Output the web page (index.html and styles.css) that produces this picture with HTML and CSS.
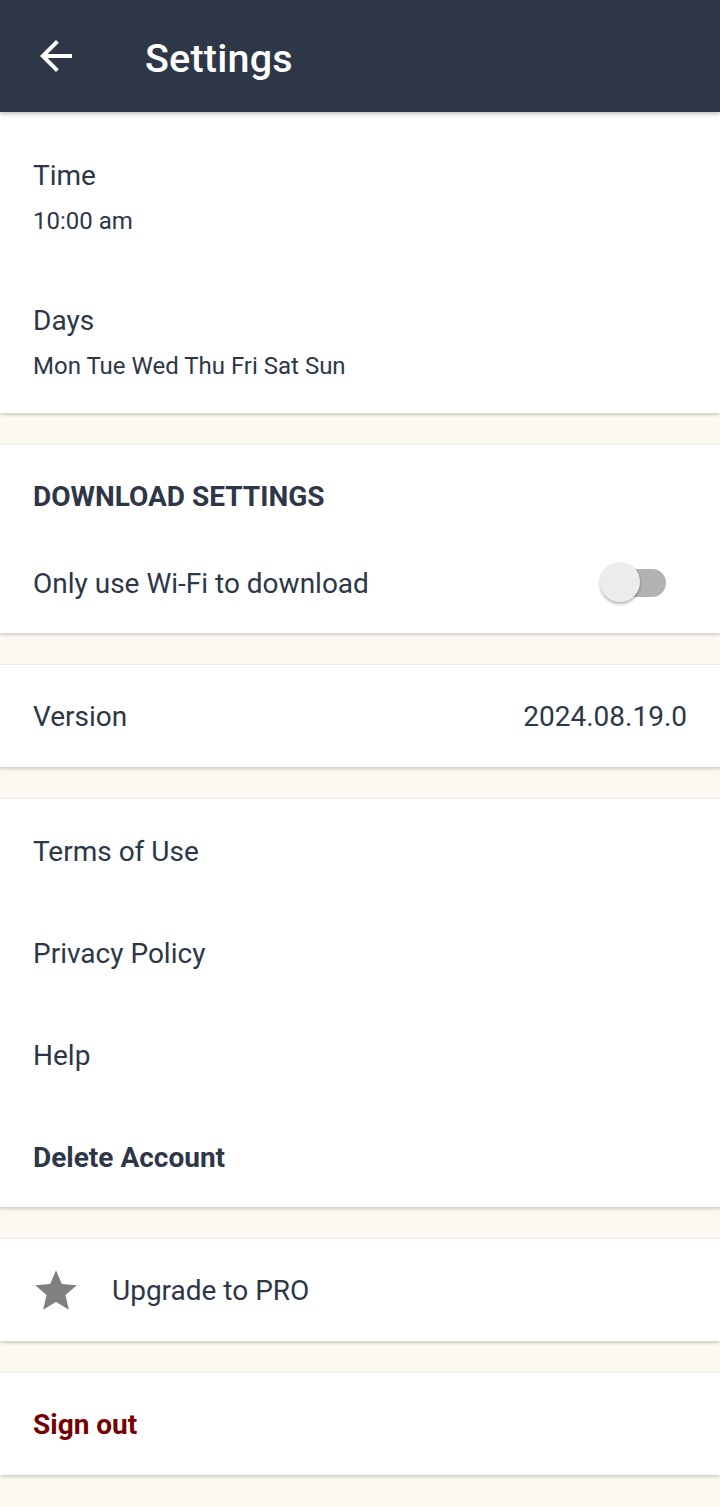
FILE: index.html
```html
<!DOCTYPE html>
<html>
<head>
<meta charset="utf-8">
<link rel="stylesheet" href="styles.css">
</head>
<body>
<header class="appbar">
  <svg class="back" viewBox="0 0 24 24" width="48" height="48"><path fill="#fff" d="M20 11H7.83l5.59-5.59L12 4l-8 8 8 8 1.41-1.41L7.83 13H20v-2z"/></svg>
  <h1 class="title">Settings</h1>
</header>
<main class="content">
  <section class="card card-first">
    <div class="item">
      <div class="label">Time</div>
      <div class="value">10:00 am</div>
    </div>
    <div class="item">
      <div class="label">Days</div>
      <div class="value">Mon Tue Wed Thu Fri Sat Sun</div>
    </div>
  </section>
  <section class="card">
    <div class="section-head">DOWNLOAD SETTINGS</div>
    <div class="row row-switch">
      <span class="label">Only use Wi-Fi to download</span>
      <span class="switch"><span class="track"></span><span class="thumb"></span></span>
    </div>
  </section>
  <section class="card">
    <div class="row row-tall">
      <span class="label">Version</span>
      <span class="label">2024.08.19.0</span>
    </div>
  </section>
  <section class="card">
    <div class="row link"><span class="label">Terms of Use</span></div>
    <div class="row link"><span class="label">Privacy Policy</span></div>
    <div class="row link"><span class="label">Help</span></div>
    <div class="row link"><span class="label bold">Delete Account</span></div>
  </section>
  <section class="card">
    <div class="row row-tall row-icon">
      <svg class="star" viewBox="0 0 24 24" width="50" height="50"><path fill="#808080" d="M12 17.27L18.18 21l-1.64-7.03L22 9.24l-7.19-.61L12 2 9.19 8.63 2 9.24l5.46 4.73L5.82 21z"/></svg>
      <span class="label">Upgrade to PRO</span>
    </div>
  </section>
  <section class="card">
    <div class="row row-tall">
      <span class="label bold signout">Sign out</span>
    </div>
  </section>
</main>
</body>
</html>
```
FILE: styles.css
```css
* { box-sizing: border-box; }
html, body { margin: 0; padding: 0; }
body {
  background: #fcf9f2;
  font-family: Roboto, "Noto Sans", "Liberation Sans", sans-serif;
  color: #2d3748;
  height: 1507px;
  overflow: hidden;
}
.appbar {
  height: 112px;
  background: #2d3748;
  display: flex;
  align-items: center;
  padding-left: 32px;
  box-shadow: 0 2px 4px rgba(0,0,0,0.25);
  position: relative;
  z-index: 2;
}
.back { display: block; }
.title {
  margin: 4px 0 0 65px;
  color: #fff;
  font-size: 39.5px;
  font-weight: 500;
  letter-spacing: 0.2px;
}
.content {
  display: flex;
  flex-direction: column;
  gap: 31px;
}
.card {
  background: #fff;
  border-top: 1px solid #f1ede6;
  box-shadow: 0 2px 3px rgba(0,0,0,0.18);
}
.card-first { border-top: none; padding-bottom: 11px; }
.item {
  padding: 45px 33px 21px;
  display: flex;
  flex-direction: column;
}
.label {
  font-size: 28px;
  line-height: 38px;
}
.value {
  font-size: 24px;
  line-height: 30px;
  margin-top: 11px;
}
.section-head {
  padding: 35px 33px 19px;
  font-size: 28px;
  line-height: 34px;
  font-weight: 700;
}
.row {
  display: flex;
  align-items: center;
  padding: 1px 33px 0;
  height: 100px;
}
.row-switch { justify-content: space-between; }
.row-tall { height: 102px; justify-content: space-between; }
.row-icon { justify-content: flex-start; padding-left: 31px; }
.link { height: 102px; padding-top: 3px; }
.bold { font-weight: 700; }
.signout { color: #760000; }
.star { margin-right: 31px; }
.switch {
  position: relative;
  width: 68px;
  height: 42px;
  margin-right: 19px;
  margin-top: -2px;
  flex-shrink: 0;
}
.track {
  position: absolute;
  left: 10px;
  top: 7px;
  width: 56px;
  height: 28px;
  border-radius: 14px;
  background: #b2b2b2;
}
.thumb {
  position: absolute;
  left: 0;
  top: 0;
  width: 40px;
  height: 40px;
  border-radius: 50%;
  background: #ececec;
  box-shadow: 0 2px 3px rgba(0,0,0,0.3);
}
```
